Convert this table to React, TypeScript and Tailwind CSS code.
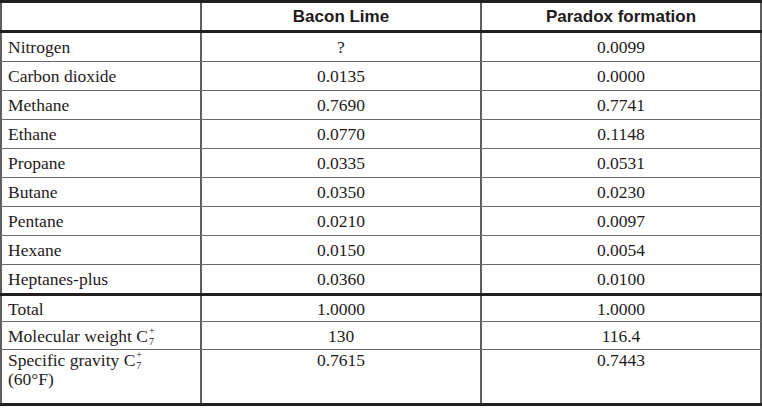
const rows: [string, string, string][] = [
  ['Nitrogen', '?', '0.0099'],
  ['Carbon dioxide', '0.0135', '0.0000'],
  ['Methane', '0.7690', '0.7741'],
  ['Ethane', '0.0770', '0.1148'],
  ['Propane', '0.0335', '0.0531'],
  ['Butane', '0.0350', '0.0230'],
  ['Pentane', '0.0210', '0.0097'],
  ['Hexane', '0.0150', '0.0054'],
  ['Heptanes-plus', '0.0360', '0.0100'],
];

function C7() {
  return (
    <span>
      C
      <span className="relative inline-block w-[8px]">
        <span className="absolute left-[1px] top-[-16px] text-[10px] leading-none">+</span>
        <span className="absolute left-[1px] top-[-5px] text-[10px] leading-none">7</span>
      </span>
    </span>
  );
}

function Row({ label, a, b, border, h, top }: { label: React.ReactNode; a: string; b: string; border: string; h: string; top?: boolean }) {
  const align = top ? 'items-start pt-[1px] leading-[19px]' : 'items-center';
  return (
    <div className={`grid grid-cols-[202px_280px_280px] ${border} ${h}`}>
      <div className={`flex ${align} border-l-2 border-r-2 border-[#5e5e5e] pl-[6px]`}>{label}</div>
      <div className={`flex ${align} justify-center border-r-2 border-[#5e5e5e]`}>{a}</div>
      <div className={`flex ${align} justify-center border-r-2 border-[#5e5e5e]`}>{b}</div>
    </div>
  );
}

export default function App() {
  return (
    <div className="w-[762px] h-[408px] bg-white text-[#1f1b1c] font-[family-name:Liberation_Serif,serif] text-[17.5px] leading-[18px]">
      <div className="border-t-[3px] border-[#231f20]">
        <div className="grid grid-cols-[202px_280px_280px] h-[30px] border-b-[3px] border-[#231f20] font-[family-name:Liberation_Sans,Arial,sans-serif] font-bold text-[17px]">
          <div className="border-l-2 border-r-2 border-[#5e5e5e]" />
          <div className="flex items-center justify-center border-r-2 border-[#5e5e5e]">Bacon Lime</div>
          <div className="flex items-center justify-center border-r-2 border-[#5e5e5e]">Paradox formation</div>
        </div>
      </div>
      {rows.map(([label, a, b], i) => (
        <Row
          key={label}
          label={label}
          a={a}
          b={b}
          border={i === rows.length - 1 ? 'border-b-[3px] border-[#231f20]' : 'border-b border-[#6a6a6a]'}
          h={i === rows.length - 1 ? 'h-[31px]' : 'h-[29px]'}
        />
      ))}
      <Row label="Total" a="1.0000" b="1.0000" border="border-b border-[#6a6a6a]" h="h-[26px]" />
      <Row label={<span>Molecular weight <C7 /></span>} a="130" b="116.4" border="border-b border-[#6a6a6a]" h="h-[28px]" />
      <Row
        label={<span>Specific gravity <C7 /><br />(60°F)</span>}
        a="0.7615"
        b="0.7443"
        border="border-b-[3px] border-[#231f20]"
        h="h-[56px]"
        top
      />
    </div>
  );
}
